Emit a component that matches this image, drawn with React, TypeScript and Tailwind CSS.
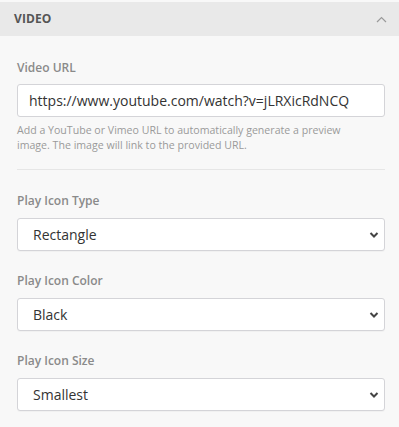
import React from "react";

function Chevron() {
  return (
    <svg width="10" height="7" viewBox="0 0 10 7" className="absolute right-[5px] top-1/2 -translate-y-1/2">
      <path d="M1.5 1.5 L5 5 L8.5 1.5" fill="none" stroke="#444" strokeWidth="2" />
    </svg>
  );
}

function SelectField({ label, value }: { label: string; value: string }) {
  return (
    <div className="flex flex-col">
      <div className="text-[12px] font-semibold text-[#8a8a8a] leading-[16px] mb-[9px]">{label}</div>
      <div className="relative h-[33px] bg-white border border-[#d4d4d8] rounded-[3px] flex items-center pl-[15px] text-[14px] text-[#333] shadow-[0_1px_1px_rgba(0,0,0,0.03)]">
        {value}
        <Chevron />
      </div>
    </div>
  );
}

export default function App() {
  return (
    <div className="w-[399px] h-[427px] bg-[#f8f8f8] pt-[2px]" style={{ fontFamily: "'Open Sans', sans-serif" }}>
      <div className="h-[34px] bg-[#e9e9e9] flex items-center justify-between pl-[14px] pr-[12px]">
        <span className="text-[12px] font-bold text-[#555] tracking-[0.1px]">VIDEO</span>
        <svg width="11" height="7" viewBox="0 0 11 7">
          <path d="M1 6 L5.5 1.5 L10 6" fill="none" stroke="#9a9a9a" strokeWidth="1.2" />
        </svg>
      </div>
      <div className="pl-[17px] pr-[14px] pt-[24px]">
        <div className="text-[12px] font-semibold text-[#8a8a8a] leading-[16px] mb-[8px]">Video URL</div>
        <div className="h-[33px] bg-white border border-[#d4d4d8] rounded-[3px] flex items-center pl-[11px] text-[14px] text-[#333]">
          https://www.youtube.com/watch?v=jLRXicRdNCQ
        </div>
        <div className="mt-[6px] text-[10.6px] leading-[15px] text-[#9a9a9a] pr-[20px]">
          Add a YouTube or Vimeo URL to automatically generate a preview image. The image will link to the provided URL.
        </div>
        <div className="mt-[16px] h-px bg-[#e6e6e6]" />
        <div className="pt-[23px] flex flex-col gap-[22px]">
          <SelectField label="Play Icon Type" value="Rectangle" />
          <SelectField label="Play Icon Color" value="Black" />
          <SelectField label="Play Icon Size" value="Smallest" />
        </div>
      </div>
    </div>
  );
}
